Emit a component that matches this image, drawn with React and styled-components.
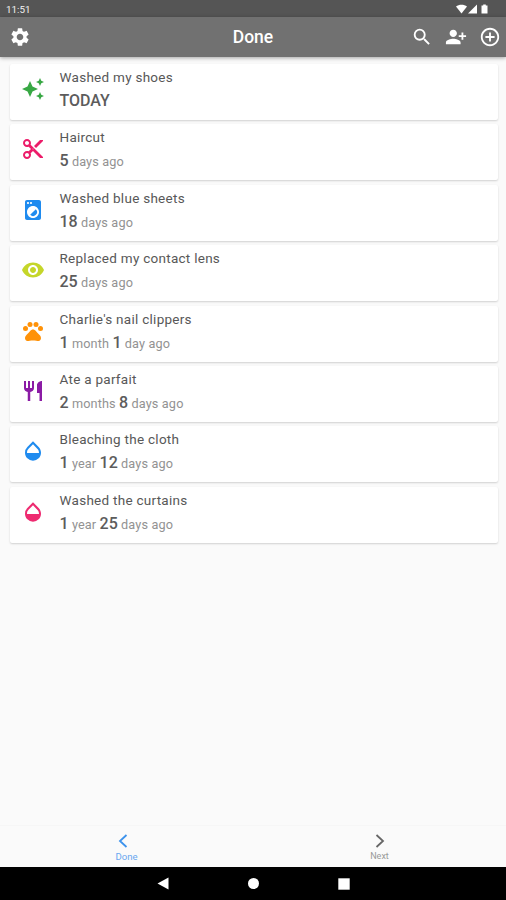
import React from "react";
import styled, { createGlobalStyle } from "styled-components";
import {
  MdSettings, MdSearch, MdPersonAddAlt1, MdAddCircleOutline, MdAutoAwesome,
  MdContentCut, MdLocalLaundryService, MdRemoveRedEye, MdPets, MdRestaurant, MdOpacity,
} from "react-icons/md";

const GlobalStyle = createGlobalStyle`
  * { box-sizing: border-box; }
  body { margin: 0; background: #fafafa; }
`;

const Screen = styled.div`
  width: 506px;
  height: 900px;
  display: flex;
  flex-direction: column;
  overflow: hidden;
  background: #fafafa;
  font-family: Roboto, sans-serif;
`;

const StatusBar = styled.div`
  flex: none;
  height: 17px;
  display: flex;
  align-items: center;
  justify-content: space-between;
  padding: 1px 17px 0 6px;
  background: #555;
  color: #f2f2f2;
  font-size: 9.8px;
`;

const AppBar = styled.header`
  flex: none;
  height: 40px;
  display: grid;
  grid-template-columns: 1fr auto 1fr;
  align-items: center;
  padding: 0 5px 0 9px;
  background: #717171;
  color: #fff;
  box-shadow: 0 1px 4px rgba(0, 0, 0, 0.35);
  svg { display: block; }
`;

const Title = styled.h1`
  margin: 0 4px 0 0;
  font-size: 17.5px;
  line-height: 20px;
  font-weight: 500;
`;

const Actions = styled.div`
  display: flex;
  justify-content: flex-end;
  gap: 12px;
`;

const List = styled.main`
  flex: 1;
  display: flex;
  flex-direction: column;
  gap: 4.4px;
  padding: 7px 8px 0 10px;
`;

const Card = styled.article`
  height: 56px;
  display: flex;
  align-items: center;
  border-radius: 2px;
  background: #fff;
  box-shadow: 0 1px 2px rgba(0, 0, 0, 0.17);
`;

const IconSlot = styled.div`
  width: 49.5px;
  padding: 0 0 6px 10.5px;
  color: ${(p) => p.$color};
  svg { display: block; }
`;

const Name = styled.div`
  font-size: 13.5px;
  line-height: 20px;
  letter-spacing: 0.27px;
  color: #585858;
`;

const Elapsed = styled.div`
  margin-top: 2px;
  padding-bottom: 3px;
  font-size: 12.7px;
  line-height: 24px;
  letter-spacing: 0.14px;
  color: #929292;
  white-space: pre;
`;

const Count = styled.b`
  font-size: 16px;
  font-weight: 500;
  letter-spacing: 0;
  color: #5c5c5c;
`;

const Tabs = styled.nav`
  flex: none;
  height: 42px;
  display: flex;
  border-top: 1px solid #f6f6f6;
`;

const Tab = styled.div`
  flex: 1;
  display: flex;
  flex-direction: column;
  align-items: center;
  gap: 2px;
  padding-top: 8px;
  font-size: ${(p) => (p.$active ? "9.6px" : "9px")};
  line-height: 13px;
  color: ${(p) => (p.$active ? "#69a7f0" : "#999")};
  svg { color: ${(p) => (p.$active ? "#3c92ec" : "#666")}; margin-left: ${(p) => (p.$active ? "-7px" : "0")}; }
`;

const SystemNav = styled.footer`
  flex: none;
  height: 33px;
  display: flex;
  align-items: center;
  justify-content: center;
  gap: 79px;
  background: #000;
`;

const entries = [
  { name: "Washed my shoes", icon: MdAutoAwesome, color: "#38a844", parts: [["TODAY", ""]] },
  { name: "Haircut", icon: MdContentCut, color: "#ec1c69", parts: [["5", " days ago"]] },
  { name: "Washed blue sheets", icon: MdLocalLaundryService, color: "#1f8bef", parts: [["18", " days ago"]] },
  { name: "Replaced my contact lens", icon: MdRemoveRedEye, color: "#c5d62a", parts: [["25", " days ago"]] },
  { name: "Charlie's nail clippers", icon: MdPets, color: "#ff9208", parts: [["1", " month "], ["1", " day ago"]] },
  { name: "Ate a parfait", icon: MdRestaurant, color: "#8b1ba5", parts: [["2", " months "], ["8", " days ago"]] },
  { name: "Bleaching the cloth", icon: MdOpacity, color: "#1f8bef", parts: [["1", " year "], ["12", " days ago"]] },
  { name: "Washed the curtains", icon: MdOpacity, color: "#ee2a70", parts: [["1", " year "], ["25", " days ago"]] },
];

function StatusIcons() {
  return (
    <svg width="33" height="10" viewBox="0 0 33 10" fill="#fff">
      <path d="M0 2.5C3 0 8 0 11 2.5L5.5 9.5Z" />
      <path d="M12 9.5L21 0.5V9.5Z" />
      <path d="M25.5 1.5h1.7V0.5h2.6v1h1.7v8h-6z" />
    </svg>
  );
}

export default function App() {
  return (
    <>
      <GlobalStyle />
      <Screen>
        <StatusBar>
          <span>11:51</span>
          <StatusIcons />
        </StatusBar>
        <AppBar>
          <MdSettings size={22} />
          <Title>Done</Title>
          <Actions>
            <MdSearch size={22} />
            <MdPersonAddAlt1 size={22} />
            <MdAddCircleOutline size={22} />
          </Actions>
        </AppBar>
        <List>
          {entries.map(({ name, icon: Icon, color, parts }) => (
            <Card key={name}>
              <IconSlot $color={color}><Icon size={24} /></IconSlot>
              <div>
                <Name>{name}</Name>
                <Elapsed>
                  {parts.map(([n, unit], i) => (
                    <React.Fragment key={i}><Count>{n}</Count>{unit}</React.Fragment>
                  ))}
                </Elapsed>
              </div>
            </Card>
          ))}
        </List>
        <Tabs>
          <Tab $active>
            <svg width="10" height="14" viewBox="0 0 10 14" fill="none" stroke="currentColor" strokeWidth="1.8"><path d="M8.5 1L2 7l6.5 6" /></svg>
            Done
          </Tab>
          <Tab>
            <svg width="10" height="14" viewBox="0 0 10 14" fill="none" stroke="currentColor" strokeWidth="1.8"><path d="M1.5 1L8 7l-6.5 6" /></svg>
            Next
          </Tab>
        </Tabs>
        <SystemNav>
          <svg width="12" height="13" viewBox="0 0 12 13" fill="#fff"><path d="M0.5 6.5L11.5 0.5v12z" /></svg>
          <svg width="11" height="11" viewBox="0 0 11 11" fill="#fff"><circle cx="5.5" cy="5.5" r="5.5" /></svg>
          <svg width="12" height="12" viewBox="0 0 12 12" fill="#fff"><path d="M0.3 0.3h11.4v11.4H0.3z" /></svg>
        </SystemNav>
      </Screen>
    </>
  );
}
